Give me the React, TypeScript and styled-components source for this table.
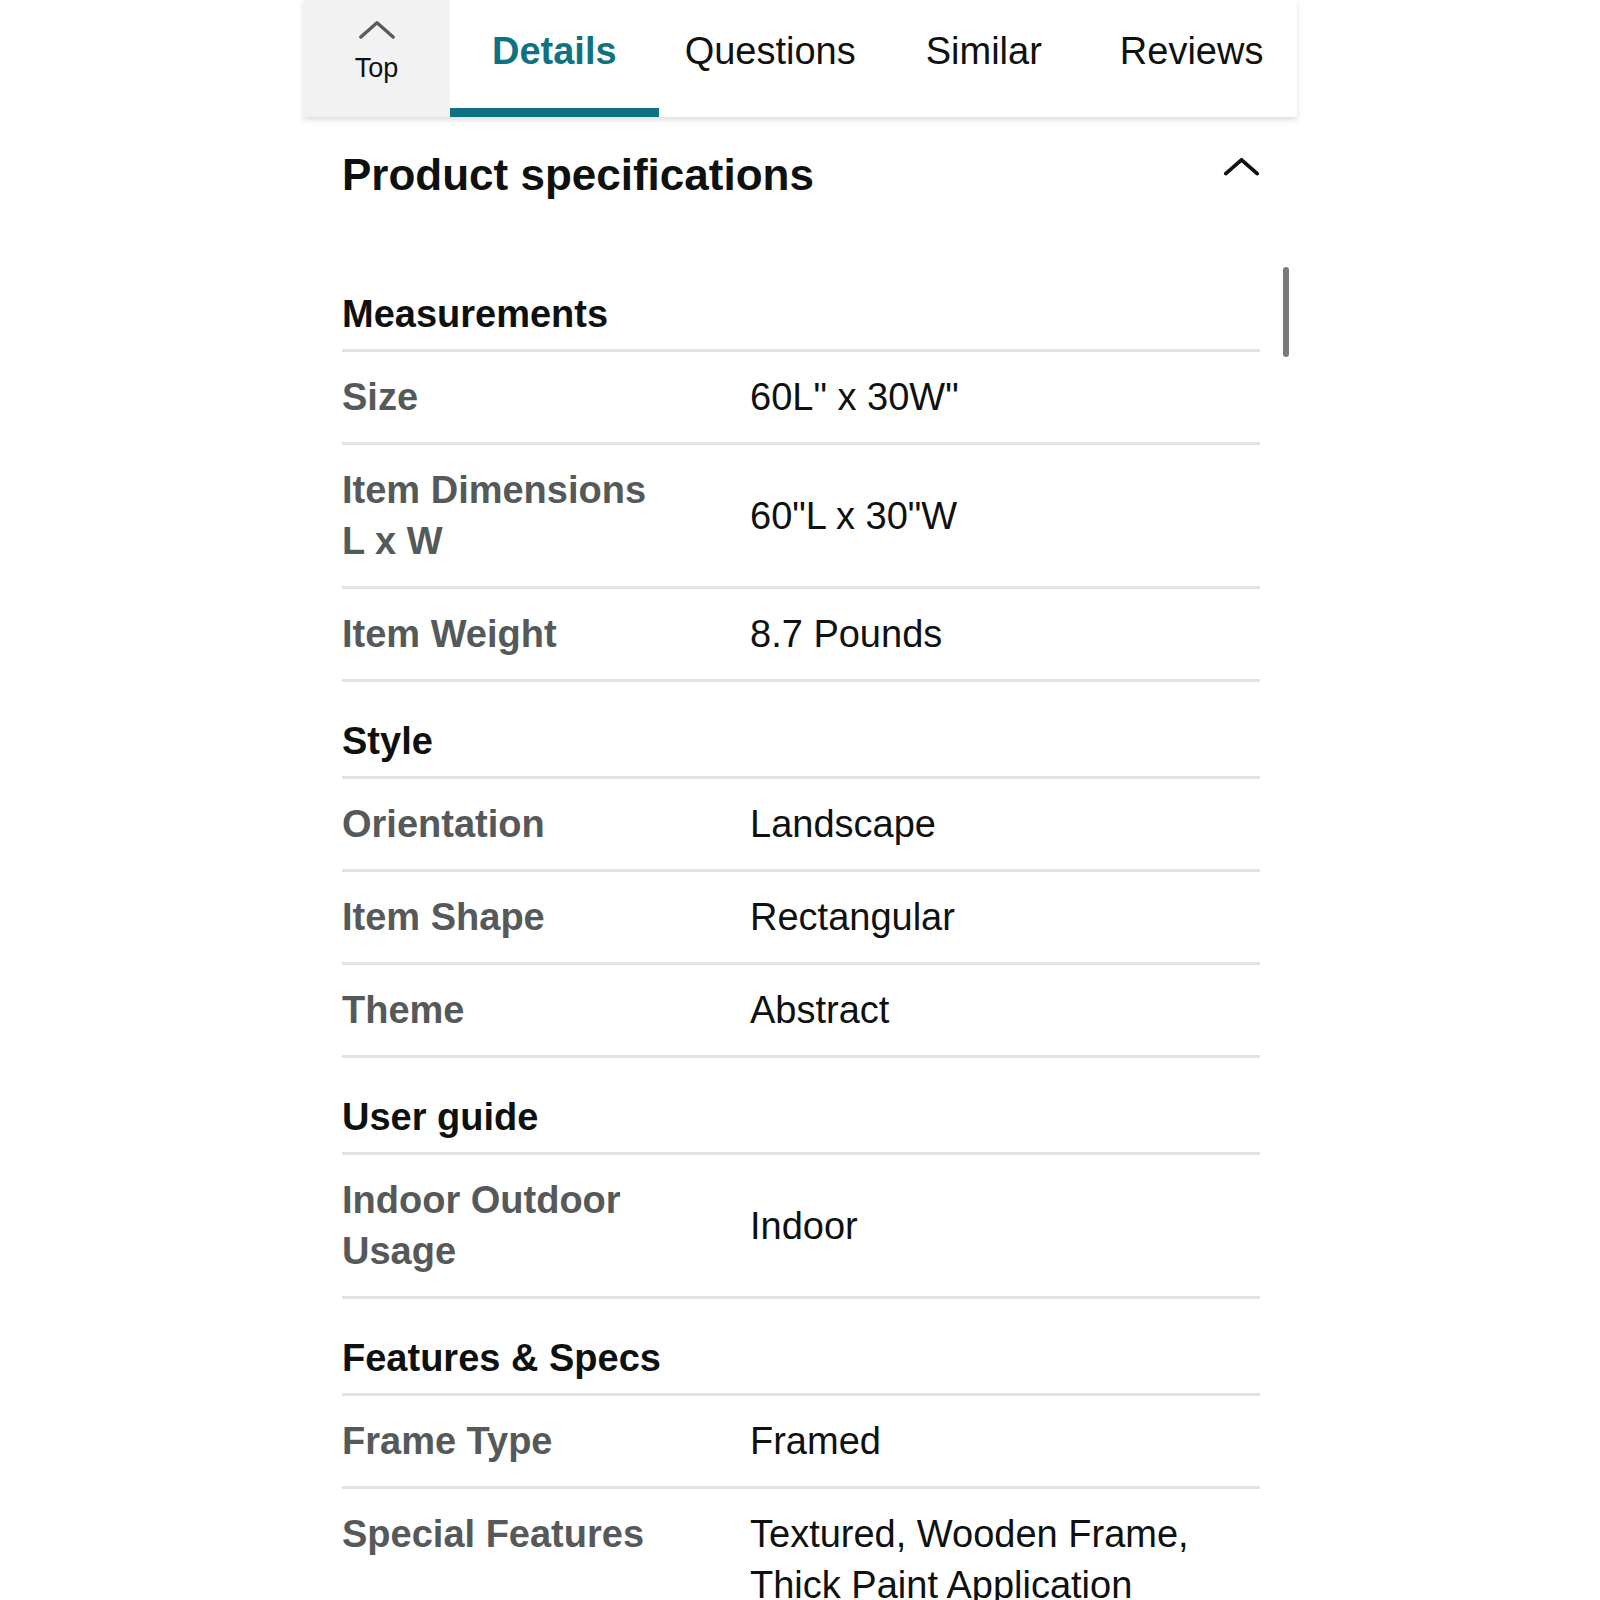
import styled, { createGlobalStyle } from "styled-components";

const GlobalStyle = createGlobalStyle`
  html, body {
    margin: 0;
    padding: 0;
    background: #ffffff;
    font-family: "Liberation Sans", Arial, sans-serif;
    color: #0f1111;
  }
  body {
    height: 1600px;
    overflow: hidden;
  }
`;

const Panel = styled.div`
  position: relative;
  width: 994px;
  margin: 0 auto;
  background: #ffffff;
`;

const TabBar = styled.div`
  display: flex;
  height: 117px;
  background: #ffffff;
  box-shadow: 0 3px 5px rgba(0, 0, 0, 0.13);
  position: relative;
  z-index: 1;
`;

const TopButton = styled.div`
  width: 147px;
  background: #f2f2f2;
  display: flex;
  flex-direction: column;
  align-items: center;
  padding-top: 20px;
  box-sizing: border-box;
  font-size: 27px;
  line-height: 30px;
  color: #0f1111;
  gap: 14px;
`;

const Tab = styled.div<{ $active?: boolean; $left: number; $right: number }>`
  position: relative;
  display: flex;
  align-items: flex-start;
  padding: 29px ${(p) => p.$right}px 0 ${(p) => p.$left}px;
  font-size: 38px;
  line-height: 44px;
  font-weight: ${(p) => (p.$active ? 700 : 400)};
  color: ${(p) => (p.$active ? "#0f7282" : "#0f1111")};

  &::after {
    content: "";
    display: ${(p) => (p.$active ? "block" : "none")};
    position: absolute;
    left: 0;
    right: 0;
    bottom: 0;
    height: 9px;
    background: #0f7282;
  }
`;

const Content = styled.div`
  padding: 0 37px 0 39px;
`;

const SpecHeader = styled.div`
  display: flex;
  justify-content: space-between;
  align-items: flex-start;
  padding-top: 30px;
  height: 56px;
  margin-bottom: 52px;

  svg {
    margin-top: 10px;
  }
`;

const SpecTitle = styled.h1`
  margin: 0;
  font-size: 44px;
  line-height: 56px;
  font-weight: 700;
  color: #0f1111;
`;

const SectionTitle = styled.h2`
  margin: 0;
  padding: 37px 0 13px;
  font-size: 38px;
  line-height: 44px;
  font-weight: 700;
  color: #0f1111;
  border-bottom: 3px solid #e3e3e3;
`;

const Row = styled.div<{ $top?: boolean }>`
  display: grid;
  grid-template-columns: 408px 1fr;
  align-items: ${(p) => (p.$top ? "start" : "center")};
  padding: 20px 0 19px;
  border-bottom: 3px solid #e3e3e3;
  font-size: 38px;
  line-height: 51px;
`;

const Label = styled.div`
  font-weight: 700;
  color: #565959;
  padding-right: 76px;
`;

const Value = styled.div`
  color: #0f1111;
`;

const ScrollThumb = styled.div`
  position: absolute;
  left: 980px;
  top: 267px;
  width: 6px;
  height: 90px;
  border-radius: 3px;
  background: #7a7a7a;
`;

type Spec = { label: string; value: string; top?: boolean };
type Section = { title: string; rows: Spec[] };

const tabs = [
  { label: "Details", active: true, left: 42, right: 42 },
  { label: "Questions", left: 26, right: 35 },
  { label: "Similar", left: 35, right: 38 },
  { label: "Reviews", left: 40, right: 0 },
];

const sections: Section[] = [
  {
    title: "Measurements",
    rows: [
      { label: "Size", value: '60L" x 30W"' },
      { label: "Item Dimensions L x W", value: '60"L x 30"W' },
      { label: "Item Weight", value: "8.7 Pounds" },
    ],
  },
  {
    title: "Style",
    rows: [
      { label: "Orientation", value: "Landscape" },
      { label: "Item Shape", value: "Rectangular" },
      { label: "Theme", value: "Abstract" },
    ],
  },
  {
    title: "User guide",
    rows: [{ label: "Indoor Outdoor Usage", value: "Indoor" }],
  },
  {
    title: "Features & Specs",
    rows: [
      { label: "Frame Type", value: "Framed" },
      {
        label: "Special Features",
        value: "Textured, Wooden Frame, Thick Paint Application",
        top: true,
      },
    ],
  },
];

function Chevron({ color, width, stroke }: { color: string; width: number; stroke: number }) {
  return (
    <svg width={width} height={width * 0.5} viewBox="0 0 40 20" fill="none">
      <polyline
        points="3,18 20,3 37,18"
        stroke={color}
        strokeWidth={stroke}
        strokeLinecap="round"
        strokeLinejoin="round"
      />
    </svg>
  );
}

function App() {
  return (
    <>
      <GlobalStyle />
      <Panel>
        <TabBar>
          <TopButton>
            <Chevron color="#5a5a5a" width={38} stroke={3.5} />
            <span>Top</span>
          </TopButton>
          {tabs.map((t) => (
            <Tab key={t.label} $active={t.active} $left={t.left} $right={t.right}>
              {t.label}
            </Tab>
          ))}
        </TabBar>
        <Content>
          <SpecHeader>
            <SpecTitle>Product specifications</SpecTitle>
            <Chevron color="#111111" width={37} stroke={4} />
          </SpecHeader>
          {sections.map((section) => (
            <div key={section.title}>
              <SectionTitle>{section.title}</SectionTitle>
              {section.rows.map((row) => (
                <Row key={row.label} $top={row.top}>
                  <Label>{row.label}</Label>
                  <Value>{row.value}</Value>
                </Row>
              ))}
            </div>
          ))}
        </Content>
        <ScrollThumb />
      </Panel>
    </>
  );
}

export default App;
